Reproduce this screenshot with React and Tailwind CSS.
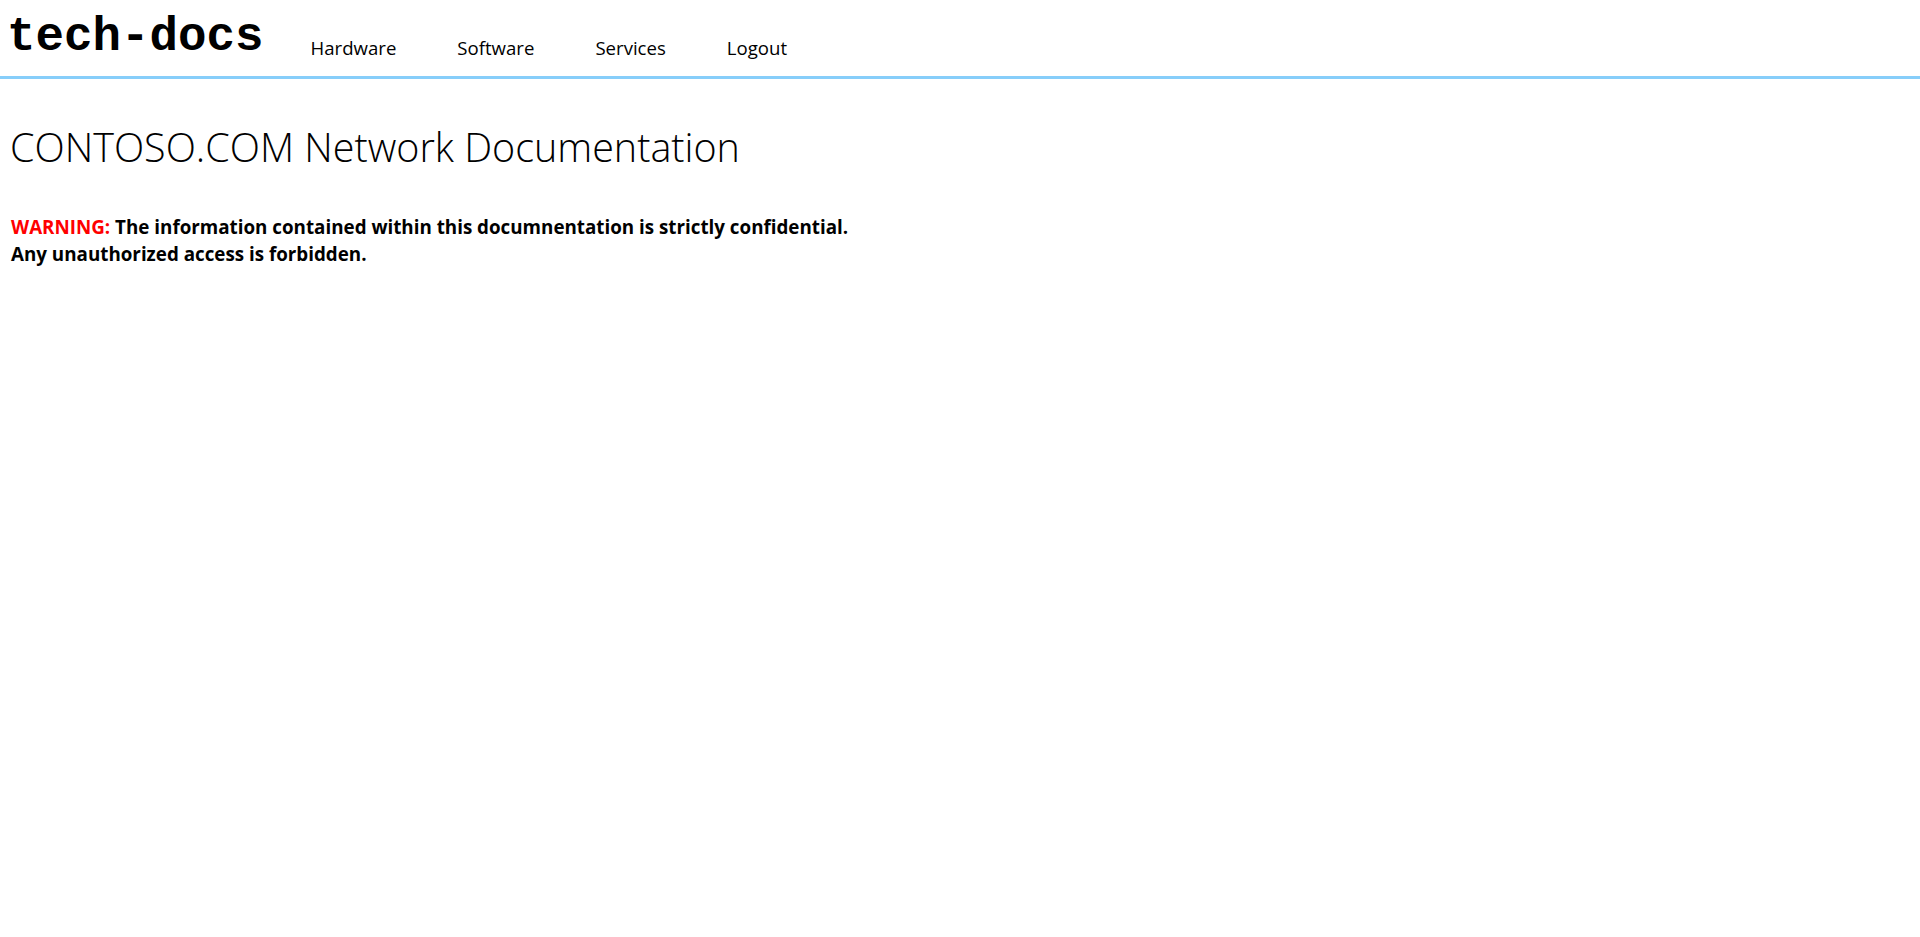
import React from 'react'

const navItems = ['Hardware', 'Software', 'Services', 'Logout']

const Header = () => {
  return (
    <header className="flex h-[79px] items-start border-b-[3px] border-[#87cefa] pl-[7px]">
      <div className="mt-[13px] font-['Liberation_Mono',monospace] text-[47.5px] font-bold leading-[48px]">
        tech-docs
      </div>
      <nav className="ml-[47px] mt-[36px] flex gap-[61px] text-[18.6px] leading-[24px]">
        {navItems.map((item) => (
          <a key={item} href="#" className="text-black">
            {item}
          </a>
        ))}
      </nav>
    </header>
  )
}

export default function App() {
  return (
    <div className="min-h-screen bg-white font-['Open_Sans',sans-serif] text-black">
      <Header />
      <main className="pl-[10px]">
        <h1 className="mt-[45px] text-[39.5px] font-light leading-[46.8px]">
          CONTOSO.COM Network Documentation
        </h1>
        <p className="mt-[43px] pl-[1px] text-[18.8px] font-bold leading-[26.7px]">
          <span className="text-[#ff0000]">WARNING:</span> The information contained within this documnentation is strictly confidential.
          <br />
          Any unauthorized access is forbidden.
        </p>
      </main>
    </div>
  )
}
